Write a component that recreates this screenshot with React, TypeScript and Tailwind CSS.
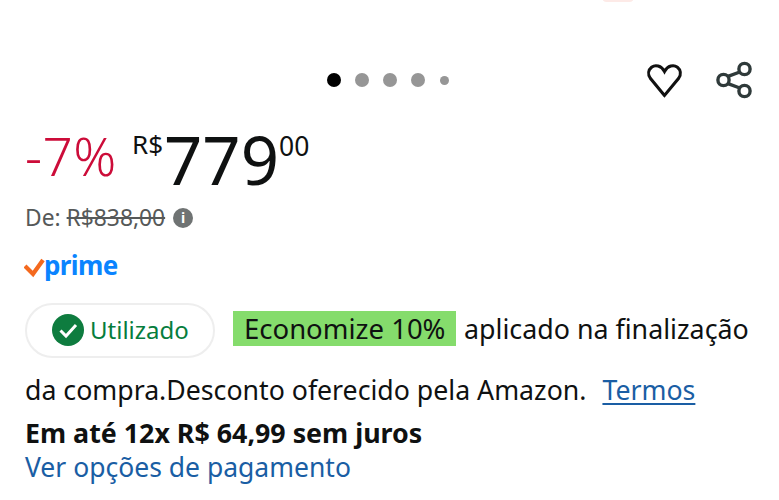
import React from "react";

export default function App() {
  return (
    <div className="w-[779px] h-[500px] overflow-hidden bg-white text-[#0f1111] font-['Noto_Sans',sans-serif] relative">
      <div className="absolute left-[602px] -top-[7px] w-[32px] h-[9px] rounded-full bg-[#fdeae7]" />
      <div className="flex items-center h-[52px] mt-[54px] relative">
        <div className="flex items-center gap-[14px] ml-[327px]">
          <span className="w-[14px] h-[14px] rounded-full bg-black" />
          <span className="w-[14px] h-[14px] rounded-full bg-[#969696]" />
          <span className="w-[14px] h-[14px] rounded-full bg-[#969696]" />
          <span className="w-[14px] h-[14px] rounded-full bg-[#969696]" />
          <span className="w-[9px] h-[9px] rounded-full bg-[#969696] ml-[1px]" />
        </div>
        <div className="flex items-center ml-auto mr-[27px] gap-[33px]">
          <svg width="37" height="38" viewBox="0 0 36 37" fill="none" stroke="#111" strokeWidth="3" strokeLinejoin="miter">
            <path d="M18 33.5 L4.2 16.8 C1.6 13 2.2 8.6 5.4 6.1 C9 3.4 14.8 4.4 18 10.2 C21.2 4.4 27 3.4 30.6 6.1 C33.8 8.6 34.4 13 31.8 16.8 Z" />
          </svg>
          <svg width="36" height="40" viewBox="0 0 36 40" fill="none" stroke="#2f3a3a" strokeWidth="3.4">
            <circle cx="28.5" cy="9" r="5.6" />
            <circle cx="7.5" cy="20" r="5.6" />
            <circle cx="28.5" cy="31" r="5.6" />
            <path d="M12 16.4 L23.8 12 M12 23.6 L23.8 28" />
          </svg>
        </div>
      </div>

      <div className="flex items-start ml-[25px] mt-[24px] h-[62px]">
        <span className="text-[53px] leading-[46px] font-light tracking-[0.5px] text-[#cc0c39] mt-[3px] w-[107px] whitespace-nowrap">-7%</span>
        <span className="text-[26px] leading-[26px] mt-[1px]">R$</span>
        <span className="text-[67px] leading-[62px] -mt-[2px] ml-[1px]">779</span>
        <span className="text-[26.5px] leading-[28px] mt-[2px]">00</span>
      </div>

      <div className="flex items-center ml-[25px] mt-[13px] h-[26px] text-[#565959] text-[22.8px]">
        <span>De:</span>
        <span className="line-through ml-[6px]">R$838,00</span>
        <span className="ml-[8px] w-[20px] h-[20px] rounded-full bg-[#6f7373] text-white text-[14px] font-bold flex items-center justify-center leading-none">i</span>
      </div>

      <div className="flex items-center ml-[24px] mt-[20px] h-[28px]">
        <svg width="21" height="20" viewBox="0 0 21 20" className="mt-[5px]">
          <path d="M1 8 L9 16 L19 2" fill="none" stroke="#f4691e" strokeWidth="4.2" />
        </svg>
        <span className="text-[26px] leading-[28px] font-bold text-[#0a84ff] tracking-[-0.6px] -ml-[1px]">prime</span>
      </div>

      <div className="flex items-center ml-[25px] mt-[23px] h-[56px]">
        <div className="flex items-center w-[190px] h-[55px] rounded-full border-2 border-[#eeeeee] pl-[25px]">
          <svg width="32" height="32" viewBox="0 0 32 32">
            <circle cx="16" cy="16" r="16" fill="#0e7c3f" />
            <path d="M8.5 16.5 L14 22 L24 11" fill="none" stroke="#fff" strokeWidth="3" />
          </svg>
          <span className="ml-[6px] text-[24px] text-[#067d3d] leading-none">Utilizado</span>
        </div>
        <span className="ml-[18px] -mt-[3px] h-[35px] w-[223px] bg-[#85dc6c] text-[27.5px] leading-[35px] pl-[11px] whitespace-nowrap">Economize 10%</span>
        <span className="ml-[8px] -mt-[3px] text-[26.8px] leading-[35px] whitespace-nowrap">aplicado na finalização</span>
      </div>

      <div className="ml-[25px] mt-[15px] h-[34px] text-[26.7px] leading-[34px] whitespace-nowrap">
        da compra.Desconto oferecido pela Amazon.
        <a className="ml-[16px] text-[#1a5ea4] underline underline-offset-[3px]">Termos</a>
      </div>
      <div className="ml-[25px] mt-[11px] text-[26.8px] leading-[30px] font-bold whitespace-nowrap">Em até 12x R$ 64,99 sem juros</div>
      <div className="ml-[25px] mt-[2px] text-[26.5px] leading-[34px] text-[#1a5ea4] whitespace-nowrap">Ver opções de pagamento</div>
    </div>
  );
}
